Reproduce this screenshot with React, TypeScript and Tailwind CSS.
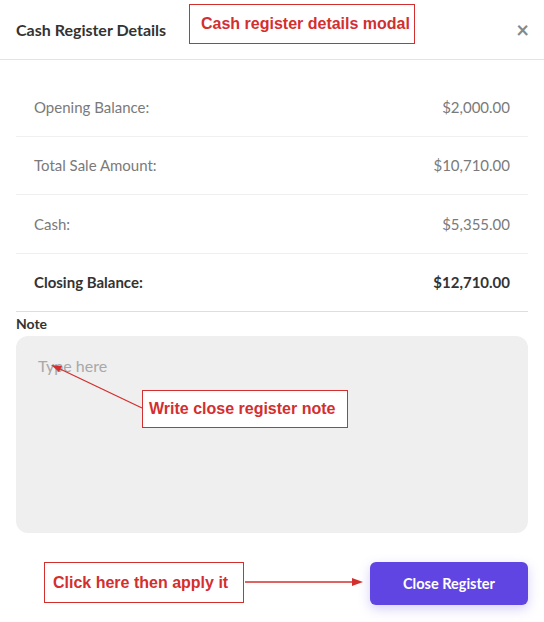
import React from 'react';

const rows = [
  { label: 'Opening Balance:', value: '$2,000.00' },
  { label: 'Total Sale Amount:', value: '$10,710.00' },
  { label: 'Cash:', value: '$5,355.00' },
];

function Note({ className, children }: { className: string; children: React.ReactNode }) {
  return (
    <div
      className={`absolute border border-[#d32f2f] bg-white flex items-center text-[#d32f2f] font-bold text-[16px] whitespace-nowrap ${className}`}
      style={{ fontFamily: '"Liberation Sans", Arial, sans-serif' }}
    >
      {children}
    </div>
  );
}

export default function App() {
  return (
    <div className="relative w-[544px] h-[622px] bg-white overflow-hidden" style={{ fontFamily: 'Lato, "Open Sans", sans-serif' }}>
      {/* Header */}
      <div className="flex items-center justify-between h-[60px] pl-4 pr-[15px] border-b border-[#e3e3e3]">
        <h2 className="text-[16px] font-bold text-[#333]">Cash Register Details</h2>
        <button className="text-[#888] text-[22px] font-bold leading-none">×</button>
      </div>

      <div className="px-4 pt-[18px]">
        {rows.map((r) => (
          <div key={r.label} className="flex items-center justify-between h-[58.6px] px-[18px] border-b border-[#f0f0f0] text-[15px] text-[#7a7a7a]">
            <span>{r.label}</span>
            <span>{r.value}</span>
          </div>
        ))}
        <div className="flex items-center justify-between h-[58.6px] px-[18px] border-b border-[#dedede] text-[15px] text-[#333] font-bold">
          <span>Closing Balance:</span>
          <span>$12,710.00</span>
        </div>

        <div className="pt-[2px] leading-[20px] text-[14px] font-bold text-[#333]">Note</div>
        <textarea
          placeholder="Type here"
          className="mt-[2px] block w-full h-[197px] resize-none rounded-xl bg-[#efefef] px-[22px] pt-[18px] text-[16px] text-[#333] placeholder:text-[#a8a8a8] outline-none"
        />

        <div className="flex justify-end mt-[29px]">
          <button className="w-[158px] h-[43px] rounded-md bg-[#6045e2] text-white text-[14.5px] font-bold shadow-[0_4px_12px_rgba(96,69,226,0.25)]">
            Close Register
          </button>
        </div>
      </div>

      {/* Annotations */}
      <Note className="left-[189px] top-[4px] w-[226px] h-[40px] pl-[11px]">Cash register details modal</Note>
      <Note className="left-[142px] top-[390px] w-[206px] h-[38px] pl-[6px]">Write close register note</Note>
      <Note className="left-[44px] top-[562px] w-[200px] h-[41px] pl-[8px]">Click here then apply it</Note>

      <svg className="absolute inset-0 pointer-events-none" width="544" height="622">
        <line x1="142" y1="408" x2="58" y2="368" stroke="#d32f2f" strokeWidth="1.3" />
        <polygon points="51,365 62,366 59,372" fill="#d32f2f" />
        <line x1="245" y1="582" x2="355" y2="582" stroke="#d32f2f" strokeWidth="1.3" />
        <polygon points="363,582 352,578 352,586" fill="#d32f2f" />
      </svg>
    </div>
  );
}
